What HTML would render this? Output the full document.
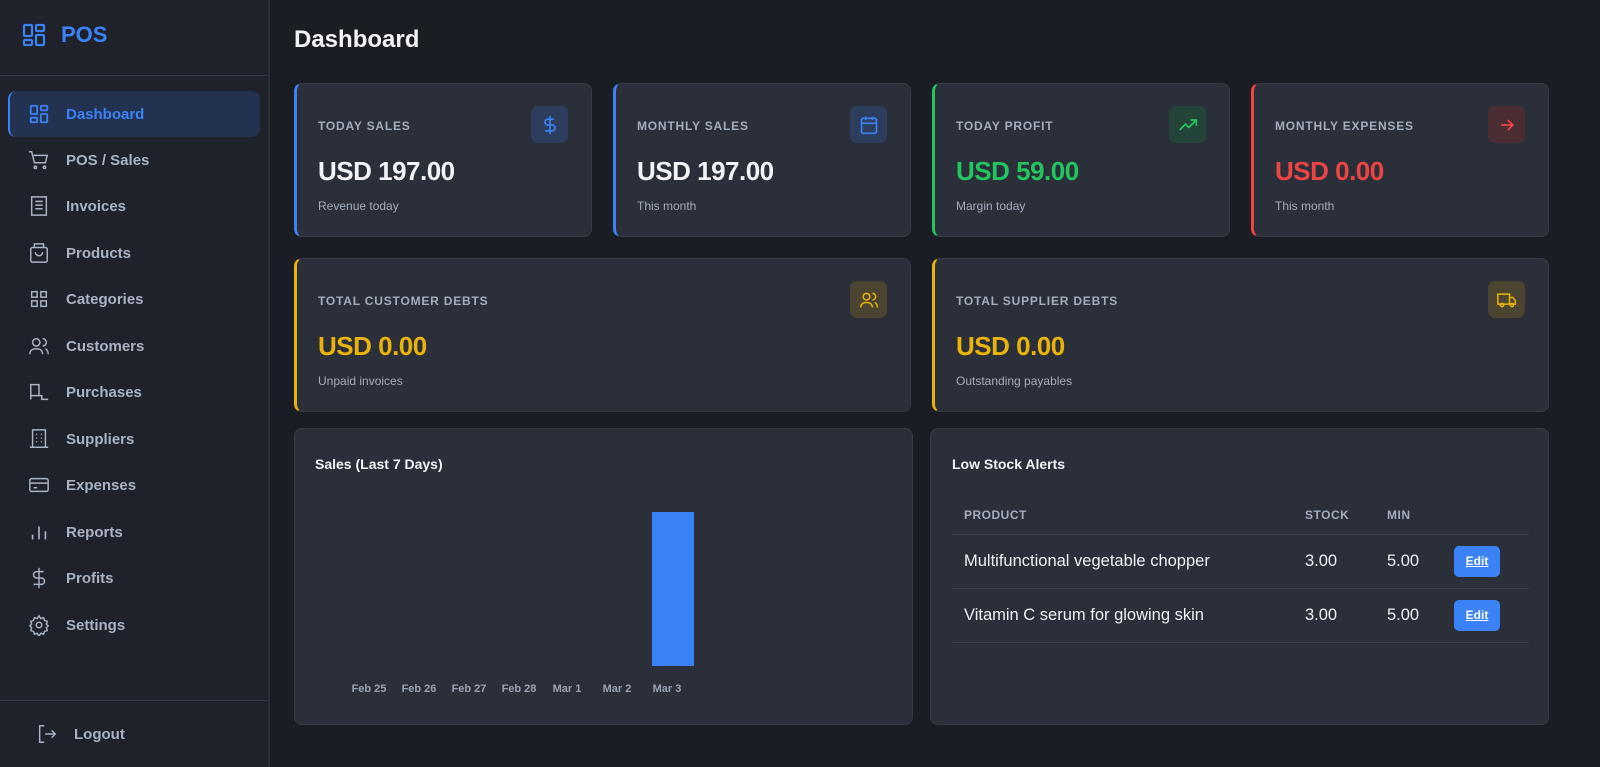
<!DOCTYPE html>
<html><head><meta charset="utf-8"><style>
*{box-sizing:border-box;margin:0;padding:0}
body{width:1600px;height:767px;background:#1a1d23;font-family:"Liberation Sans",sans-serif;color:#e5e7eb;position:relative;overflow:hidden}
.sb{position:absolute;left:0;top:0;width:270px;height:767px;background:#1f222a;border-right:2px solid #2a2e37}
.logo{position:absolute;left:22px;top:22px;display:flex;align-items:center;color:#3b82f6;font-weight:bold;font-size:22px}
.logo span{margin-left:15px}
.hr{position:absolute;left:0;width:268px;height:1px;background:#343946}
.nav{position:absolute;left:8px;width:252px;height:46px;display:flex;align-items:center;padding-left:20px;font-size:15px;font-weight:bold;color:#a9b3c4}
.nav svg{width:22px;height:22px;margin-right:16px;flex:none}
.nav.act{background:#243252;border-left:2px solid #3b82f6;border-radius:8px;color:#3b82f6;padding-left:18px}
.main h1{position:absolute;left:294px;top:26px;font-size:24px;font-weight:bold;color:#f1f3f6}
.card{position:absolute;background:#2b2f39;border:1px solid #363b46;border-radius:8px}
.stat{border-left:3px solid #3b82f6}
.lbl{position:absolute;left:21px;top:35px;font-size:12px;letter-spacing:.8px;font-weight:bold;color:#a3adbd}
.val{position:absolute;left:21px;top:72px;font-size:26px;font-weight:bold;color:#f1f3f6;letter-spacing:-.5px}
.sub{position:absolute;left:21px;top:115px;font-size:12px;color:#a3adbd}
.ib{position:absolute;right:23px;top:22px;width:37px;height:37px;border-radius:7px;display:flex;align-items:center;justify-content:center}
.ib svg{width:20px;height:20px}
table{position:absolute;left:21px;top:68px;width:577px;border-collapse:collapse;font-size:16.5px}
th{text-align:left;font-size:12px;color:#a3adbd;letter-spacing:.5px;height:37px;padding-left:12px;border-bottom:1px solid #3a3f4b;font-weight:bold}
td{height:54px;padding-left:12px;border-bottom:1px solid #3a3f4b;color:#eef0f3}
.btn{display:inline-block;background:#3b82f6;color:#fff;font-size:12px;font-weight:bold;text-decoration:underline;width:46px;height:31px;line-height:31px;text-align:center;border-radius:5px}
.xl{position:absolute;top:683px;font-size:11px;font-weight:bold;color:#9aa3b2;transform:translateX(-50%)}
</style></head><body>
<div class="sb">
<div class="logo"><svg width="24" height="24" viewBox="0 0 24 24" fill="none" stroke="#3b82f6" stroke-width="2.2"><rect x="2" y="2" width="8" height="11" rx="1"/><rect x="14" y="2" width="8" height="6" rx="1"/><rect x="14" y="12" width="8" height="10" rx="1"/><rect x="2" y="17" width="8" height="5" rx="1"/></svg><span>POS</span></div>
<div class="hr" style="top:75px"></div>
<div class="nav act" style="top:91px"><svg viewBox="0 0 24 24" fill="none" stroke="#3b82f6" stroke-width="2"><rect x="3" y="3" width="7" height="9" rx="1"/><rect x="14" y="3" width="7" height="5" rx="1"/><rect x="14" y="12" width="7" height="9" rx="1"/><rect x="3" y="16" width="7" height="5" rx="1"/></svg>Dashboard</div>
<div class="nav" style="top:137px"><svg viewBox="0 0 24 24" fill="none" stroke="#a9b3c4" stroke-width="1.6"><path d="M1 3h3l3 12h12l2-8H6"/><circle cx="8" cy="20" r="1.3"/><circle cx="18" cy="20" r="1.3"/></svg>POS / Sales</div>
<div class="nav" style="top:183px"><svg viewBox="0 0 24 24" fill="none" stroke="#a9b3c4" stroke-width="1.6"><path d="M4 2h16v20H4z"/><path d="M8 7h8M8 11h8M8 15h8"/></svg>Invoices</div>
<div class="nav" style="top:230px"><svg viewBox="0 0 24 24" fill="none" stroke="#a9b3c4" stroke-width="1.6"><rect x="3" y="6" width="18" height="16" rx="2"/><path d="M7 6V2h10v4M8 11a4 4 0 0 0 8 0"/></svg>Products</div>
<div class="nav" style="top:276px"><svg viewBox="0 0 24 24" fill="none" stroke="#a9b3c4" stroke-width="1.6"><rect x="4" y="4" width="6" height="6"/><rect x="14" y="4" width="6" height="6"/><rect x="4" y="14" width="6" height="6"/><rect x="14" y="14" width="6" height="6"/></svg>Categories</div>
<div class="nav" style="top:323px"><svg viewBox="0 0 24 24" fill="none" stroke="#a9b3c4" stroke-width="1.6"><circle cx="9" cy="8" r="4"/><path d="M2 21c0-4 3-6 7-6s7 2 7 6M16 4a4 4 0 0 1 0 8M19 15c2 1 3 3 3 6"/></svg>Customers</div>
<div class="nav" style="top:369px"><svg viewBox="0 0 24 24" fill="none" stroke="#a9b3c4" stroke-width="1.6"><path d="M3 20V4h9v12h-9M12 16h3v4h7"/></svg>Purchases</div>
<div class="nav" style="top:416px"><svg viewBox="0 0 24 24" fill="none" stroke="#a9b3c4" stroke-width="1.6"><rect x="5" y="2" width="14" height="19"/><path d="M2 21h20M9 7h1M14 7h1M9 11h1M14 11h1M9 15h1M14 15h1"/></svg>Suppliers</div>
<div class="nav" style="top:462px"><svg viewBox="0 0 24 24" fill="none" stroke="#a9b3c4" stroke-width="1.6"><rect x="2" y="5" width="20" height="14" rx="2"/><path d="M2 10h20M6 15h4"/></svg>Expenses</div>
<div class="nav" style="top:509px"><svg viewBox="0 0 24 24" fill="none" stroke="#a9b3c4" stroke-width="1.8"><path d="M5 20v-5M12 20V6M19 20v-9"/></svg>Reports</div>
<div class="nav" style="top:555px"><svg viewBox="0 0 24 24" fill="none" stroke="#a9b3c4" stroke-width="1.6"><path d="M12 1v22M17 5H9.5a3.5 3.5 0 0 0 0 7h5a3.5 3.5 0 0 1 0 7H6"/></svg>Profits</div>
<div class="nav" style="top:602px"><svg viewBox="0 0 24 24" fill="none" stroke="#a9b3c4" stroke-width="1.6"><circle cx="12" cy="12" r="3"/><path d="M12 2l2 3 3-1 1 3 3 1-1 3 2 2-2 2 1 3-3 1-1 3-3-1-2 3-2-3-3 1-1-3-3-1 1-3-2-2 2-2-1-3 3-1 1-3 3 1z"/></svg>Settings</div>
<div class="hr" style="top:700px"></div>
<div class="nav" style="top:711px;left:16px"><svg viewBox="0 0 24 24" fill="none" stroke="#a9b3c4" stroke-width="1.6"><path d="M9 3H4v18h5M10 12h11M17 8l4 4-4 4"/></svg>Logout</div>
</div>
<div class="main">
<h1>Dashboard</h1>
<div class="card stat" style="left:294px;top:83px;width:298px;height:154px"><div class="lbl">TODAY SALES</div><div class="ib" style="background:#2d3d5e"><svg viewBox="0 0 24 24" fill="none" stroke="#3b82f6" stroke-width="2"><path d="M12 1v22M17 5H9.5a3.5 3.5 0 0 0 0 7h5a3.5 3.5 0 0 1 0 7H6"/></svg></div><div class="val">USD 197.00</div><div class="sub">Revenue today</div></div>
<div class="card stat" style="left:613px;top:83px;width:298px;height:154px"><div class="lbl">MONTHLY SALES</div><div class="ib" style="background:#2d3d5e"><svg viewBox="0 0 24 24" fill="none" stroke="#3b82f6" stroke-width="2"><rect x="3" y="4" width="18" height="18" rx="2"/><path d="M16 2v4M8 2v4M3 10h18"/></svg></div><div class="val">USD 197.00</div><div class="sub">This month</div></div>
<div class="card stat" style="left:932px;top:83px;width:298px;height:154px;border-left-color:#22c55e"><div class="lbl">TODAY PROFIT</div><div class="ib" style="background:#24443a"><svg viewBox="0 0 24 24" fill="none" stroke="#22c55e" stroke-width="2"><path d="M2 18l7-7 4 4 9-9M15 6h7v7"/></svg></div><div class="val" style="color:#22c55e">USD 59.00</div><div class="sub">Margin today</div></div>
<div class="card stat" style="left:1251px;top:83px;width:298px;height:154px;border-left-color:#ef4444"><div class="lbl">MONTHLY EXPENSES</div><div class="ib" style="background:#4a2d33"><svg viewBox="0 0 24 24" fill="none" stroke="#ef4444" stroke-width="2"><path d="M5 12h14M13 6l6 6-6 6"/></svg></div><div class="val" style="color:#ef4444">USD 0.00</div><div class="sub">This month</div></div>
<div class="card stat" style="left:294px;top:258px;width:617px;height:154px;border-left-color:#eab308"><div class="lbl">TOTAL CUSTOMER DEBTS</div><div class="ib" style="background:#4a4430"><svg viewBox="0 0 24 24" fill="none" stroke="#eab308" stroke-width="1.8"><circle cx="9" cy="8" r="4"/><path d="M2 21c0-4 3-6 7-6s7 2 7 6M16 4a4 4 0 0 1 0 8M19 15c2 1 3 3 3 6"/></svg></div><div class="val" style="color:#eab308">USD 0.00</div><div class="sub">Unpaid invoices</div></div>
<div class="card stat" style="left:932px;top:258px;width:617px;height:154px;border-left-color:#eab308"><div class="lbl">TOTAL SUPPLIER DEBTS</div><div class="ib" style="background:#4a4430"><svg viewBox="0 0 24 24" fill="none" stroke="#eab308" stroke-width="1.8"><path d="M1 5h14v12H1zM15 9h4l3 4v4h-7"/><circle cx="6" cy="18" r="2"/><circle cx="18" cy="18" r="2"/></svg></div><div class="val" style="color:#eab308">USD 0.00</div><div class="sub">Outstanding payables</div></div>
<div class="card" style="left:294px;top:428px;width:619px;height:297px"><div style="position:absolute;left:20px;top:27px;font-size:14px;font-weight:bold;color:#f1f3f6">Sales (Last 7 Days)</div></div>
<div style="position:absolute;left:652px;top:512px;width:42px;height:154px;background:#3b82f6"></div>
<div class="xl" style="left:369px">Feb 25</div><div class="xl" style="left:419px">Feb 26</div><div class="xl" style="left:469px">Feb 27</div><div class="xl" style="left:519px">Feb 28</div><div class="xl" style="left:567px">Mar 1</div><div class="xl" style="left:617px">Mar 2</div><div class="xl" style="left:667px">Mar 3</div>
<div class="card" style="left:930px;top:428px;width:619px;height:297px"><div style="position:absolute;left:21px;top:27px;font-size:14px;font-weight:bold;color:#f1f3f6">Low Stock Alerts</div>
<table><tr><th style="width:341px">PRODUCT</th><th style="width:82px">STOCK</th><th style="width:67px">MIN</th><th></th></tr>
<tr><td>Multifunctional vegetable chopper</td><td>3.00</td><td>5.00</td><td><span class="btn">Edit</span></td></tr>
<tr><td>Vitamin C serum for glowing skin</td><td>3.00</td><td>5.00</td><td><span class="btn">Edit</span></td></tr></table></div>
</div>
</body></html>
